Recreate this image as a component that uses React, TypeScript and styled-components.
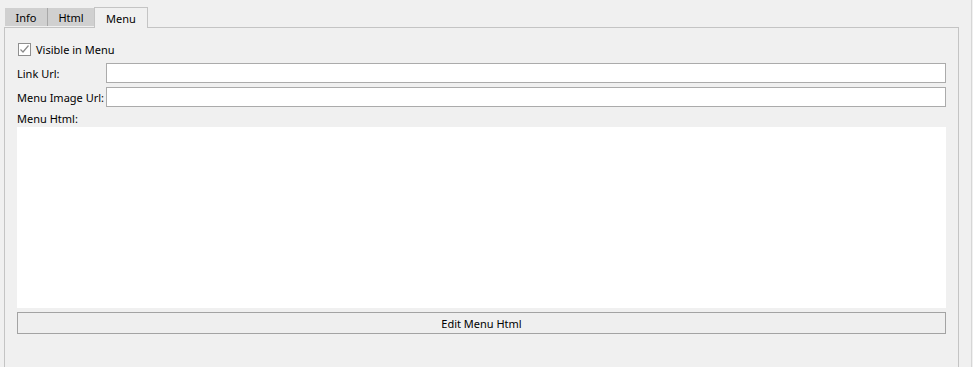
import React from "react"
import styled, { createGlobalStyle } from "styled-components"

const Global = createGlobalStyle`
    html, body {
        margin: 0;
        padding: 0;
        background: #f0f0f0;
        font-family: "Segoe UI", "Noto Sans", "Open Sans", sans-serif;
        font-size: 11px;
        color: #000;
    }
`

const Window = styled.div`
    position: relative;
    width: 972px;
    height: 367px;
    overflow: hidden;
    background: #f0f0f0;
    border-right: 1px solid #d6d6d6;
    box-sizing: border-box;
`

const TabStrip = styled.div`
    display: flex;
    align-items: flex-end;
    height: 27px;
    padding-left: 5px;
`

const Tab = styled.div<{ $active?: boolean; $divider?: boolean; $width: number }>`
    display: flex;
    align-items: center;
    justify-content: center;
    box-sizing: border-box;
    width: ${(p) => p.$width}px;
    height: ${(p) => (p.$active ? "21px" : "18px")};
    margin-bottom: ${(p) => (p.$active ? "-1px" : "1px")};
    background: ${(p) => (p.$active ? "#f0f0f0" : "#d0d0d0")};
    border: ${(p) => (p.$active ? "1px solid #c4c4c4" : "none")};
    border-bottom: none;
    border-right: ${(p) =>
        p.$active ? "1px solid #c4c4c4" : p.$divider ? "1px solid #a8a8a8" : "none"};
    position: relative;
    z-index: ${(p) => (p.$active ? 2 : 1)};
    white-space: nowrap;
    line-height: 1;
`

const Panel = styled.div`
    margin-left: 4px;
    width: 955px;
    height: 360px;
    box-sizing: border-box;
    border: 1px solid #c4c4c4;
    padding: 13px 12px 0 12px;
    display: flex;
    flex-direction: column;
`

const CheckRow = styled.label`
    display: flex;
    align-items: center;
    gap: 5px;
    height: 16px;
    padding-left: 1px;
    margin-bottom: 6px;
    white-space: nowrap;
`

const Box = styled.span`
    width: 13px;
    height: 13px;
    box-sizing: border-box;
    border: 1px solid #8f8f8f;
    background: #fff;
    display: flex;
    align-items: center;
    justify-content: center;
`

const FieldRow = styled.div`
    display: grid;
    grid-template-columns: 89px 1fr;
    align-items: center;
    height: 20px;
    margin-bottom: 4px;
    white-space: nowrap;
`

const Input = styled.div`
    height: 20px;
    box-sizing: border-box;
    border: 1px solid #ababab;
    background: #fff;
`

const Caption = styled.div`
    height: 16px;
    line-height: 16px;
`

const TextArea = styled.div`
    height: 181px;
    background: #fff;
`

const Button = styled.div`
    margin-top: 4px;
    height: 22px;
    box-sizing: border-box;
    border: 1px solid #a3a3a3;
    background: #efefef;
    display: flex;
    align-items: center;
    justify-content: center;
`

function App() {
    return (
        <Window>
            <Global />
            <TabStrip>
                <Tab $divider $width={43}>Info</Tab>
                <Tab $width={46}>Html</Tab>
                <Tab $active $width={54}>Menu</Tab>
            </TabStrip>
            <Panel>
                <CheckRow>
                    <Box>
                        <svg width="11" height="11" viewBox="0 0 11 11">
                            <path d="M1.5 5.5 L4 8 L9.5 1.5" fill="none" stroke="#8a8a8a" strokeWidth="1.2" />
                        </svg>
                    </Box>
                    Visible in Menu
                </CheckRow>
                <FieldRow>
                    <span>Link Url:</span>
                    <Input />
                </FieldRow>
                <FieldRow>
                    <span>Menu Image Url:</span>
                    <Input />
                </FieldRow>
                <Caption>Menu Html:</Caption>
                <TextArea />
                <Button>Edit Menu Html</Button>
            </Panel>
        </Window>
    )
}

export default App
